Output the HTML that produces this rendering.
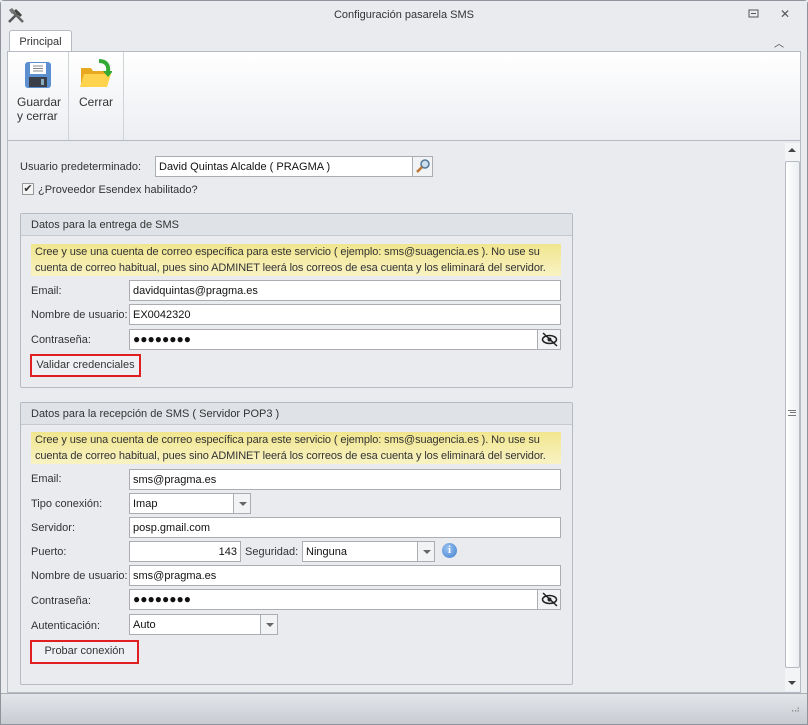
<!DOCTYPE html>
<html><head><meta charset="utf-8"><style>
*{box-sizing:border-box;margin:0;padding:0}
body{width:808px;height:725px;overflow:hidden;background:#e9ebef;font-family:"Liberation Sans",sans-serif;font-size:11px;color:#333;position:relative}
div{white-space:nowrap}
.a{position:absolute}
.in{position:absolute;background:#fff;border:1px solid #abadb3;height:21px;padding:3px 3px 0;line-height:15px;color:#111}
.lb{position:absolute;line-height:14px}
.btn{position:absolute;top:-1px;right:-1px;width:18px;height:21px;background:#f2f3f5;border:1px solid #abadb3}
.btn:after{content:"";position:absolute;left:5px;top:8px;border-left:4px solid transparent;border-right:4px solid transparent;border-top:4px solid #666}
.grp{position:absolute;border:1px solid #b6bac2;border-radius:2px}
.gh{height:22px;background:#dfe2e7;border-bottom:1px solid #c5c9d0;padding:4px 10px;line-height:14px}
.note{position:absolute;background:linear-gradient(#f1e68e,#f8f2c4);padding:0 4px;line-height:16px;color:#333;letter-spacing:-0.1px}
.red{position:absolute;border:2px solid #e02020;background:#eef0f3;text-align:center;line-height:18px}
</style></head><body>
<div class="a" style="left:0;top:0;width:808px;height:725px;border:1px solid #8f949c;border-radius:4px 4px 0 0"></div>
<div class="a" style="left:1px;top:1px;width:806px;height:29px;background:#e9ebef"></div>
<svg class="a" style="left:7px;top:6px" width="18" height="18" viewBox="0 0 18 18"><path d="M2 16 L12 6" stroke="#555" stroke-width="2.5"/><path d="M9 3 l6 6 l-2 2 l-6 -6z" fill="#444"/><path d="M16 16 L6 6" stroke="#666" stroke-width="2.5"/><path d="M2 4 l3 -2 l3 3 l-3 3z" fill="#777"/></svg>
<div class="a" style="left:0;width:808px;top:9px;text-align:center">Configuración pasarela SMS</div>
<svg class="a" style="left:748px;top:9px" width="12" height="10"><rect x="1" y="1" width="9" height="7" fill="none" stroke="#555"/><rect x="3" y="4" width="5" height="1" fill="#555"/></svg>
<div class="a" style="left:780px;top:7px;font-size:12px;color:#555">✕</div>
<div class="a" style="left:9px;top:30px;width:63px;height:23px;background:#fff;border:1px solid #b6bac2;border-bottom:none;border-radius:3px 3px 0 0;text-align:center;line-height:22px;color:#333">Principal</div>
<div class="a" style="left:774px;top:35px;font-size:10px;color:#444">︿</div>
<div class="a" style="left:7px;top:51px;width:794px;height:90px;background:linear-gradient(#fff,#eceef2);border:1px solid #b6bac2"></div>
<div class="a" style="left:68px;top:52px;width:1px;height:88px;background:#d0d3d8"></div>
<div class="a" style="left:123px;top:52px;width:1px;height:88px;background:#d0d3d8"></div>
<svg class="a" style="left:24px;top:61px" width="28" height="28" viewBox="0 0 28 28"><rect x="1" y="1" width="26" height="26" rx="3" fill="#5b8fd0"/><rect x="6" y="2" width="16" height="11" fill="#fff"/><path d="M9 5h10M9 7.5h10M9 10h10" stroke="#888"/><rect x="5" y="16" width="18" height="10" fill="#3b3f48"/><rect x="17" y="18" width="3" height="6" fill="#8ab"/></svg>
<svg class="a" style="left:79px;top:58px" width="33" height="32" viewBox="0 0 33 32"><path d="M2 10h10l2 3h14v16H2z" fill="#e8a820"/><path d="M5 16h27l-4 13H1z" fill="#ffd34d"/><path d="M20 3c7 0 10 4 9 11" stroke="#3a3" stroke-width="4" fill="none"/><path d="M24 13l5 6 5-6z" fill="#3a3"/></svg>
<div class="a" style="left:17px;top:95px;line-height:14px;font-size:12px">Guardar<br>y cerrar</div>
<div class="a" style="left:79px;top:95px;font-size:12px">Cerrar</div>
<div class="a" style="left:7px;top:140px;width:794px;height:553px;border:1px solid #b6bac2;border-top:none"></div>
<div class="a" style="left:785px;top:143px;width:15px;height:548px;background:#f3f4f6"></div>
<div class="a" style="left:788px;top:148px;border-left:4px solid transparent;border-right:4px solid transparent;border-bottom:4px solid #444"></div>
<div class="a" style="left:785px;top:161px;width:15px;height:507px;background:linear-gradient(90deg,#fff,#eceef1);border:1px solid #b6bac2;border-radius:2px"></div>
<div class="a" style="left:788px;top:410px;width:8px;height:6px;border-top:1px solid #777;border-bottom:1px solid #777"></div>
<div class="a" style="left:790px;top:412px;width:6px;height:1px;background:#777"></div>
<div class="a" style="left:788px;top:681px;border-left:4px solid transparent;border-right:4px solid transparent;border-top:4px solid #444"></div>
<div class="a" style="left:1px;top:693px;width:806px;height:31px;background:linear-gradient(#e3e5e9,#c8ccd2);border-top:1px solid #a8adb5"></div>
<div class="a" style="left:788px;top:704px;font-size:9px;color:#888;letter-spacing:-1px">⠠⠴</div>

<div class="lb" style="left:20px;top:160px">Usuario predeterminado:</div>
<div class="in" style="left:155px;top:156px;width:278px">David Quintas Alcalde ( PRAGMA )</div>
<div class="a" style="left:412px;top:156px;width:21px;height:21px;border:1px solid #abadb3;background:#f2f3f5"></div>
<svg class="a" style="left:415px;top:158px" width="16" height="16"><circle cx="10" cy="6" r="4" fill="#cde" stroke="#579" stroke-width="1.5"/><path d="M7 9l-5 5" stroke="#b73" stroke-width="2.5"/></svg>
<div class="a" style="left:22px;top:183px;width:12px;height:12px;border:1px solid #999;background:#f4f4f4;font-size:11px;line-height:10px;text-align:center">✔</div>
<div class="lb" style="left:38px;top:183px">¿Proveedor Esendex habilitado?</div>

<div class="grp" style="left:20px;top:213px;width:553px;height:175px"><div class="gh">Datos para la entrega de SMS</div></div>
<div class="note" style="left:31px;top:244px;width:530px;height:32px">Cree y use una cuenta de correo específica para este servicio ( ejemplo: sms@suagencia.es ). No use su<br>cuenta de correo habitual, pues sino ADMINET leerá los correos de esa cuenta y los eliminará del servidor.</div>
<div class="lb" style="left:31px;top:284px">Email:</div>
<div class="in" style="left:129px;top:280px;width:432px">davidquintas@pragma.es</div>
<div class="lb" style="left:31px;top:308px">Nombre de usuario:</div>
<div class="in" style="left:129px;top:304px;width:432px">EX0042320</div>
<div class="lb" style="left:31px;top:333px">Contraseña:</div>
<div class="in" style="left:129px;top:329px;width:432px;font-size:12px;padding-top:2px">●●●●●●●●</div>
<div class="a" style="left:537px;top:329px;width:24px;height:21px;border:1px solid #abadb3;background:#f2f3f5"></div>
<svg class="a" style="left:541px;top:332px" width="17" height="15"><ellipse cx="8.5" cy="7.5" rx="7" ry="4" fill="none" stroke="#222" stroke-width="1.5"/><circle cx="8.5" cy="7.5" r="2" fill="#222"/><path d="M2 1l14 13" stroke="#222" stroke-width="1.5"/></svg>
<div class="red" style="left:30px;top:354px;width:111px;height:23px">Validar credenciales</div>

<div class="grp" style="left:20px;top:402px;width:553px;height:283px"><div class="gh">Datos para la recepción de SMS ( Servidor POP3 )</div></div>
<div class="note" style="left:31px;top:432px;width:530px;height:32px">Cree y use una cuenta de correo específica para este servicio ( ejemplo: sms@suagencia.es ). No use su<br>cuenta de correo habitual, pues sino ADMINET leerá los correos de esa cuenta y los eliminará del servidor.</div>
<div class="lb" style="left:31px;top:472px">Email:</div>
<div class="in" style="left:129px;top:469px;width:432px">sms@pragma.es</div>
<div class="lb" style="left:31px;top:497px">Tipo conexión:</div>
<div class="in" style="left:129px;top:493px;width:122px">Imap<div class="btn"></div></div>
<div class="lb" style="left:31px;top:521px">Servidor:</div>
<div class="in" style="left:129px;top:517px;width:432px">posp.gmail.com</div>
<div class="lb" style="left:31px;top:545px">Puerto:</div>
<div class="in" style="left:129px;top:541px;width:112px;text-align:right">143</div>
<div class="lb" style="left:245px;top:545px">Seguridad:</div>
<div class="in" style="left:302px;top:541px;width:133px">Ninguna<div class="btn"></div></div>
<div class="a" style="left:442px;top:543px;width:15px;height:15px;border-radius:50%;background:radial-gradient(circle at 40% 35%,#9cc3f0,#3f7fd0);color:#fff;font-weight:bold;font-size:11px;text-align:center;line-height:15px;font-family:'Liberation Serif',serif">i</div>
<div class="lb" style="left:31px;top:569px">Nombre de usuario:</div>
<div class="in" style="left:129px;top:565px;width:432px">sms@pragma.es</div>
<div class="lb" style="left:31px;top:594px">Contraseña:</div>
<div class="in" style="left:129px;top:589px;width:432px;font-size:12px;padding-top:2px">●●●●●●●●</div>
<div class="a" style="left:537px;top:589px;width:24px;height:21px;border:1px solid #abadb3;background:#f2f3f5"></div>
<svg class="a" style="left:541px;top:592px" width="17" height="15"><ellipse cx="8.5" cy="7.5" rx="7" ry="4" fill="none" stroke="#222" stroke-width="1.5"/><circle cx="8.5" cy="7.5" r="2" fill="#222"/><path d="M2 1l14 13" stroke="#222" stroke-width="1.5"/></svg>
<div class="lb" style="left:31px;top:619px">Autenticación:</div>
<div class="in" style="left:129px;top:614px;width:149px">Auto<div class="btn"></div></div>
<div class="red" style="left:30px;top:640px;width:109px;height:24px;line-height:19px">Probar conexión</div>
</body></html>
